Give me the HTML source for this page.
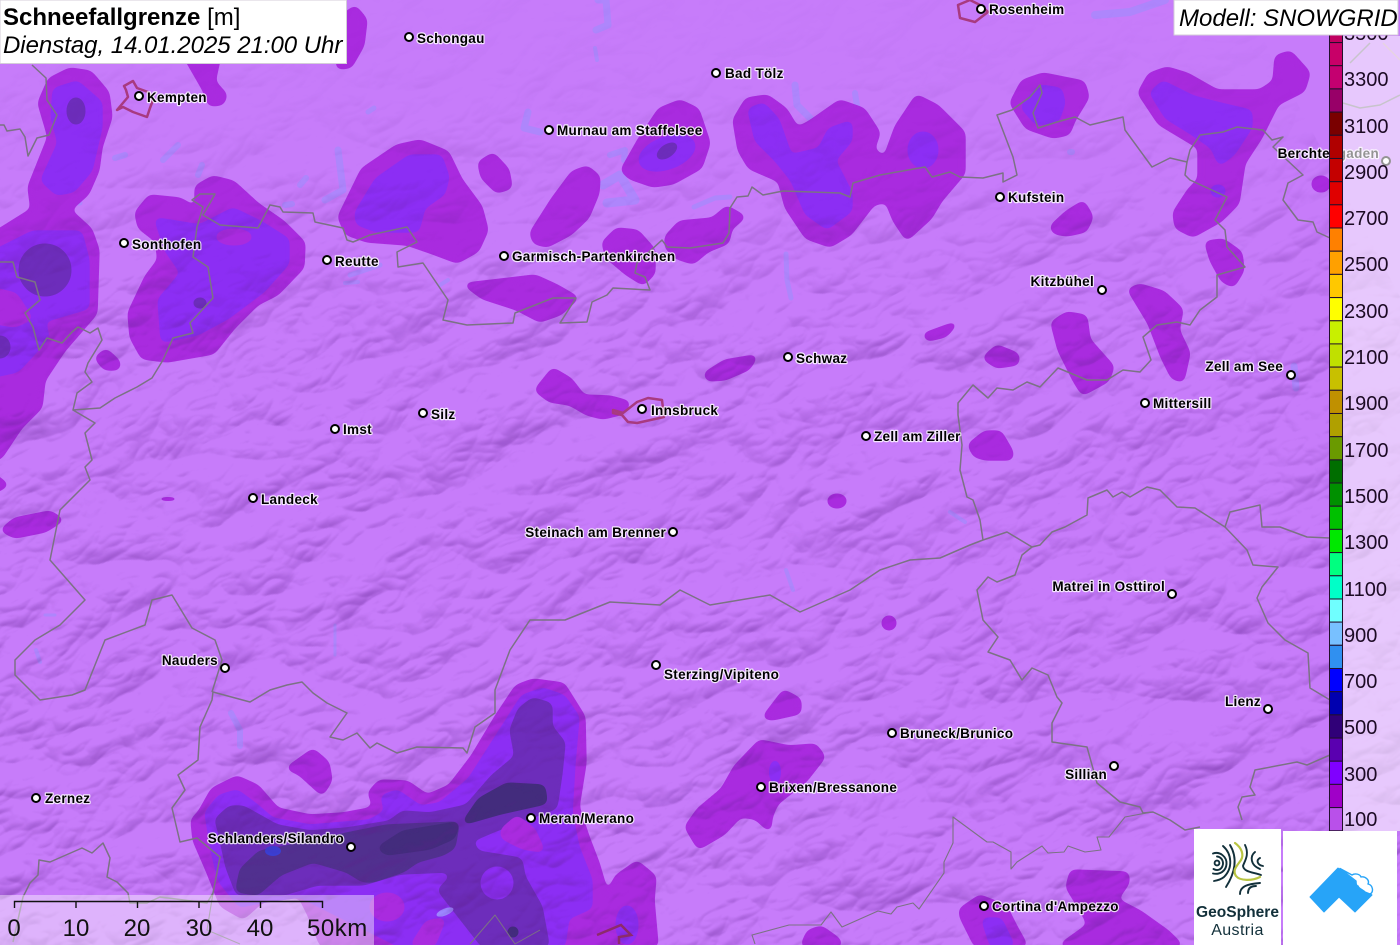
<!DOCTYPE html>
<html><head><meta charset="utf-8"><title>Schneefallgrenze</title>
<style>
html,body{margin:0;padding:0;width:1400px;height:945px;overflow:hidden;background:#c77cfa}
svg{position:absolute;left:0;top:0;display:block;overflow:hidden}
text{font-family:"Liberation Sans",sans-serif}
.c text{font-size:13.5px;font-weight:bold;fill:#000;stroke:#fff;stroke-width:2.4px;stroke-opacity:.8;paint-order:stroke;stroke-linejoin:round;letter-spacing:.3px}
.m circle{fill:#fff;stroke:#000;stroke-width:2}
.l1{fill:#a92bdf;stroke:#a92bdf}
.l2{fill:#8c2ef4;stroke:#8c2ef4}
.l3{fill:#6d2dbb;stroke:#6d2dbb}
.l4{fill:#51308f;stroke:#51308f}
.l5{fill:#432c7d;stroke:#432c7d}
.b polygon,.b ellipse{stroke-width:3;stroke-linejoin:round}
.b polygon{filter:url(#g)}
.lk polyline{fill:none;stroke:#ae86fc;stroke-linecap:round;stroke-linejoin:round}
.bd polyline{fill:none;stroke:#7b7284;stroke-width:1.5;stroke-linejoin:round}
.ct polygon{fill:none;stroke:#a83a80;stroke-width:2.5;stroke-linejoin:round}
.lg text{font-size:20px;fill:#1c0a24}
</style></head><body>
<svg width="1400" height="945" viewBox="0 0 1400 945" xmlns="http://www.w3.org/2000/svg">
<defs>
<filter id="g" x="-30%" y="-30%" width="160%" height="160%" color-interpolation-filters="sRGB">
<feGaussianBlur stdDeviation="3.5"/>
<feColorMatrix type="matrix" values="1 0 0 0 0  0 1 0 0 0  0 0 1 0 0  0 0 0 18 -6"/>
</filter>
<filter id="hs" filterUnits="userSpaceOnUse" x="-400" y="-400" width="2200" height="2200" color-interpolation-filters="sRGB">
<feTurbulence type="turbulence" baseFrequency="0.007 0.013" numOctaves="4" seed="7" result="n"/>
<feDiffuseLighting in="n" surfaceScale="11" diffuseConstant="1.05" lighting-color="#fff" result="d"><feDistantLight azimuth="300" elevation="52"/></feDiffuseLighting>
<feColorMatrix in="d" type="matrix" values="0 0 0 0 .36  0 0 0 0 .12  0 0 0 0 .55  -0.6 0 0 0 .5"/>
<feGaussianBlur stdDeviation=".7"/>
</filter>
<pattern id="hp" patternUnits="userSpaceOnUse" x="-400" y="-400" width="2200" height="2200" patternTransform="rotate(-28 700 472)">
<rect x="-400" y="-400" width="2200" height="2200" filter="url(#hs)"/>
</pattern>
<linearGradient id="mg" x1="0" y1="0" x2="0" y2="1"><stop offset="0.03" stop-color="#fff" stop-opacity=".06"/><stop offset="0.17" stop-color="#fff" stop-opacity=".3"/><stop offset="0.36" stop-color="#fff" stop-opacity=".85"/><stop offset="1" stop-color="#fff" stop-opacity="1"/></linearGradient>
<mask id="mk"><rect width="1400" height="945" fill="url(#mg)"/></mask>
</defs>
<rect width="1400" height="945" fill="#c77cfa"/>

<!-- lakes -->
<g class="lk">
<polyline points="786,254 787,280 791,298" stroke-width="5"/>
<polyline points="231,713 240,730 240,746" stroke-width="6"/>
<polyline points="335,625 335,655" stroke-width="3"/>
<polyline points="786,570 793,590" stroke-width="4"/>
<polyline points="950,512 965,522" stroke-width="4"/>
<polyline points="598,0 606,0 608,25 596,30" stroke-width="7"/>
<polyline points="595,48 597,60" stroke-width="4"/>
<polyline points="528,112 524,128 540,132" stroke-width="7"/>
<polyline points="795,85 797,105 812,120" stroke-width="7"/>
<polyline points="855,93 857,106" stroke-width="6"/>
<polyline points="603,185 620,175 635,200 607,203" stroke-width="9"/>
<polyline points="610,155 625,150 624,160" stroke-width="6"/>
<polyline points="694,207 715,198 730,197" stroke-width="5"/>
<polyline points="1095,15 1130,12 1165,0" stroke-width="8"/>
<polyline points="1294,366 1296,388" stroke-width="7"/>
<polyline points="115,158 125,155" stroke-width="6"/>
<polyline points="163,160 178,145" stroke-width="6"/>
<polyline points="198,175 202,165" stroke-width="6"/>
<polyline points="300,185 306,178" stroke-width="6"/>
<polyline points="285,205 292,204" stroke-width="6"/>
<polyline points="338,150 343,190 325,200" stroke-width="7"/>
<polyline points="368,112 374,108" stroke-width="5"/>
<polyline points="350,275 380,265" stroke-width="5"/>
<polyline points="345,283 358,282" stroke-width="4"/>
<polyline points="440,285 448,280" stroke-width="4"/>
<polyline points="68,203 80,203" stroke-width="5"/>
<polyline points="36,650 40,662" stroke-width="4"/>
<polyline points="1070,152 1072,152" stroke-width="6"/>
<polyline points="45,615 55,615" stroke-width="3"/>
</g>

<!-- level 1 blobs -->
<g class="b">
<polygon class="l1" points="70,70 90,73 107,93 110,117 100,147 97,170 87,193 68,210 90,230 97,250 95,313 63,350 43,380 40,407 20,427 0,457 -15,460 -15,240 33,210 30,187 50,137 40,103 50,80"/>
<polygon class="l1" points="137,213 150,197 180,200 197,210 197,187 213,178 233,183 257,205 283,223 303,243 302,267 277,293 257,303 233,327 213,352 167,360 143,357 132,337 130,313 147,277 160,260 157,240 140,227"/>
<polygon class="l1" points="340,217 363,170 397,147 420,142 447,153 460,180 480,207 486,230 477,250 457,261 433,252 407,243 367,240 347,233"/>
<polygon class="l1" points="480,163 493,155 507,170 510,187 497,191 483,177"/>
<polygon class="l1" points="182,50 220,50 213,82 225,95 222,103 210,104 205,90"/>
<polygon class="l1" points="345,15 355,8 365,20 362,45 350,66 338,67"/>
<polygon class="l1" points="623,170 640,140 660,110 680,102 697,110 708,143 700,167 673,182 653,185 630,177"/>
<polygon class="l1" points="532,233 553,200 573,173 587,168 598,177 597,193 587,217 570,233 547,245 535,242"/>
<polygon class="l1" points="604,243 617,230 637,232 653,250 653,273 643,283 627,273 608,257"/>
<polygon class="l1" points="667,237 680,223 713,220 727,208 743,217 730,228 727,242 707,250 693,262 677,257 667,247"/>
<polygon class="l1" points="467,285 493,282 535,277 557,287 576,298 560,313 540,320 517,308 483,297"/>
<polygon class="l1" points="735,120 747,100 767,97 785,110 797,130 810,123 840,102 863,110 878,133 872,150 885,160 897,127 917,97 937,107 963,133 963,173 940,200 930,217 907,238 895,220 887,200 873,203 850,233 830,245 807,237 787,207 780,180 750,167 740,150"/>
<polygon class="l1" points="1012,103 1023,82 1043,75 1083,83 1087,97 1073,120 1068,133 1053,136 1027,127"/>
<polygon class="l1" points="1140,93 1150,75 1167,69 1187,75 1217,92 1260,92 1275,82 1277,57 1290,53 1308,73 1303,90 1277,103 1260,137 1243,163 1237,203 1220,220 1193,235 1177,227 1175,213 1190,190 1200,180 1200,147 1160,123"/>
<polygon class="l1" points="1052,227 1067,213 1083,203 1091,217 1085,230 1067,234 1055,232"/>
<polygon class="l1" points="1207,243 1223,241 1240,253 1242,270 1233,285 1223,280 1212,260"/>
<polygon class="l1" points="1130,290 1140,286 1163,293 1181,310 1177,330 1188,353 1182,380 1173,377 1163,357 1150,323"/>
<polygon class="l1" points="1053,323 1067,314 1085,317 1088,340 1112,367 1107,380 1083,393 1075,380 1060,350"/>
<polygon class="l1" points="985,358 997,347 1017,355 1017,363 997,366"/>
<ellipse class="l1" cx="1321" cy="184" rx="8" ry="7"/>
<polygon class="l1" points="706,374 725,362 755,357 748,368 725,378 708,379"/>
<polygon class="l1" points="925,335 955,324 945,335 928,339"/>
<polygon class="l1" points="537,390 553,370 570,380 583,397 610,398 628,403 623,412 603,417 587,413 570,403 550,400"/>
<polygon class="l1" points="3,530 15,520 50,513 61,520 45,530 15,536"/>
<ellipse class="l1" cx="168" cy="499" rx="6" ry="1.5" style="stroke-width:1"/>
<polygon class="l1" points="97,358 106,351 118,362 118,368 105,368"/>
<polygon class="l1" points="970,445 985,433 1000,433 1011,452 1011,458 985,458 975,455"/>
<ellipse class="l1" cx="837" cy="501" rx="8" ry="6"/>
<ellipse class="l1" cx="889" cy="623" rx="6" ry="6"/>
<polygon class="l1" points="765,717 784,692 799,700 799,712 772,718"/>
<polygon class="l1" points="687,827 699,810 723,790 736,767 760,742 789,748 815,746 823,757 805,780 776,803 770,817 769,829 756,817 740,815 723,833 699,847"/>
<polygon class="l1" points="961,910 980,897 1005,907 1015,927 1025,945 976,945 962,917"/>
<polygon class="l1" points="1068,887 1072,872 1127,874 1127,883 1115,900 1140,913 1168,933 1180,945 1062,945 1090,925 1082,910"/>
<polygon class="l1" points="821,928 838,940 840,945 803,945 809,932"/>
<polygon class="l1" points="289,768 313,751 327,763 330,780 322,793 300,773"/>
<polygon class="l1" points="-10,473 6,485 -10,493"/>
<!-- south massif -->
<polygon class="l1" points="200,813 213,790 237,778 257,787 277,810 310,817 343,815 370,810 375,805 370,793 380,782 407,783 427,797 450,787 473,757 497,717 517,687 533,681 563,685 583,717 584,763 577,807 587,837 597,863 607,897 617,877 637,863 654,877 652,900 656,945 322,945 310,915 300,895 262,900 243,917 222,905 208,870 195,840 193,820"/>

<!-- level 2 -->
<polygon class="l2" points="77,83 100,103 100,127 90,170 73,190 57,193 43,180 60,143 53,117 55,90"/>
<polygon class="l2" points="-15,257 33,233 80,233 87,260 87,307 43,320 47,337 33,353 17,370 -15,377"/>
<polygon class="l1" points="-15,288 15,295 30,318 15,325 -15,320"/>
<polygon class="l2" points="157,220 200,227 233,210 260,223 287,240 287,263 263,290 227,317 197,333 163,340 160,300 183,273 167,250"/>
<ellipse class="l1" cx="234" cy="237" rx="16" ry="7"/>
<polygon class="l2" points="357,213 377,180 410,157 440,157 447,177 443,193 423,207 417,230 377,230 358,223"/>
<ellipse class="l2" cx="667" cy="153" rx="28" ry="15" transform="rotate(-20 667 153)"/>
<polygon class="l2" points="750,110 763,105 777,120 790,157 820,150 830,130 850,123 850,140 833,160 850,193 850,210 827,227 807,213 793,180 777,160 757,140"/>
<ellipse class="l2" cx="923" cy="150" rx="14" ry="17"/>
<polygon class="l2" points="1023,107 1040,87 1060,90 1063,103 1057,120 1037,123"/>
<polygon class="l2" points="1152,93 1163,83 1193,98 1220,105 1250,112 1250,127 1233,153 1220,163 1213,147 1193,133 1167,117"/>
<ellipse class="l2" cx="1218" cy="191" rx="6" ry="5"/>
<ellipse class="l2" cx="775" cy="772" rx="5" ry="10" style="stroke-width:2"/>
<polygon class="l2" points="984,920 1000,920 1012,945 992,945"/>
<polygon class="l2" points="207,813 220,797 237,792 257,807 272,820 310,827 370,822 387,812 383,797 397,792 420,808 440,805 470,780 502,730 523,697 543,690 563,697 577,717 573,763 570,813 577,847 590,880 590,907 567,917 563,945 400,945 330,910 300,895 265,900 240,905 220,880 213,850"/>
<ellipse class="l2" cx="627" cy="925" rx="10" ry="18"/>

<!-- level 3+ -->
<polygon class="l3" points="217,820 230,808 243,808 277,827 310,833 347,830 390,823 403,813 430,815 467,807 493,777 517,757 512,730 520,710 533,700 550,705 550,727 563,743 560,773 555,807 493,830 470,840 477,853 520,860 523,877 540,907 547,945 483,945 440,890 453,877 447,870 400,872 363,883 317,883 283,893 260,893 238,893 233,880 228,867 220,830"/>
<ellipse class="l2" cx="497" cy="883" rx="15" ry="15"/>
<ellipse class="l1" cx="387" cy="907" rx="16" ry="13"/>
<polygon class="l1" points="413,945 427,923 443,920 433,945"/>
<polygon class="l1" points="503,830 517,818 533,830 542,850 523,847 503,837"/>
<polygon class="l4" points="238,890 242,870 260,853 313,843 347,835 387,827 457,824 453,847 443,853 417,860 403,870 373,880 363,880 347,870 313,860 280,873 257,893"/>
<polygon class="l5" points="380,848 403,833 457,824 453,837 430,847 387,853"/>
<polygon class="l5" points="465,822 480,800 507,785 543,787 545,802 500,812"/>
<ellipse class="l5" cx="513" cy="932" rx="5" ry="5" style="stroke-width:1"/>
<ellipse cx="273" cy="851" rx="8" ry="5" fill="#3a3fd2" style="stroke:none"/>
<ellipse cx="445" cy="912" rx="9" ry="3.5" fill="#9c86ff" style="stroke:none" transform="rotate(-22 445 912)"/>
<ellipse class="l3" cx="76" cy="111" rx="9" ry="13" style="stroke-width:1"/>
<ellipse class="l3" cx="45" cy="270" rx="26" ry="26" style="stroke-width:1"/>
<ellipse class="l3" cx="0" cy="347" rx="10" ry="11" style="stroke-width:1"/>
<ellipse class="l3" cx="200" cy="303" rx="6" ry="5" style="stroke-width:1"/>
<ellipse class="l3" cx="667" cy="151" rx="11" ry="6" style="stroke-width:1" transform="rotate(-35 667 151)"/>
</g>

<!-- hillshade -->
<g mask="url(#mk)"><rect width="1400" height="945" fill="url(#hp)"/></g>

<!-- borders -->
<g class="bd">
<polyline points="32,65 46,78 47,100 57,115 49,135 37,138 28,156 25,137 20,129 7,131 4,125 0,125"/>
<polyline points="0,262 13,262 17,277 35,282 40,300 25,313 33,327 39,350 47,338 62,343 72,332 78,327 90,333 98,328 102,340 88,363 85,372 92,382 77,393 73,410 100,408 115,398 137,387 152,378 163,360 173,338 193,333 190,323 213,298 208,267 193,257 197,227 203,207 192,200 200,194 215,194 210,203 203,215 220,225 258,228 270,205 280,207 283,212 313,213 315,222 343,228 347,240 353,242 370,235 407,227 417,242 397,252 398,267 423,263 448,300 443,320 467,325 513,323 515,313 553,298 576,298 560,323 587,322 592,302 607,295 613,288 650,290 645,277 635,273 637,263 662,240 667,247 690,248 723,243 729,233 730,208 737,197 748,196 752,187 763,195 783,191 840,193 850,197 853,183 880,175 925,167 932,177 950,172 960,177 983,178 1003,173 1003,182 1017,175 1013,157 997,115 1012,110 1030,97 1040,85 1042,93 1033,113 1038,128 1057,122 1075,117 1090,125 1123,117 1125,130 1152,167 1170,158 1187,162 1190,150 1200,135 1223,132 1237,127 1263,130 1272,140 1283,137 1273,147 1303,175 1288,183 1283,200 1298,220 1313,222 1317,232 1330,238"/>
<polyline points="1187,162 1185,175 1190,180 1227,197 1215,220 1225,230 1227,247 1245,267 1217,275 1217,297 1200,310 1190,325 1177,322 1157,325 1143,337 1151,360 1140,372 1123,370 1107,380 1087,380 1058,368 1040,387 1027,382 1013,390 997,388 988,398 973,385 958,403 958,415 962,445 960,470 967,497 973,500 980,520 983,540"/>
<polyline points="1330,700 1310,688 1308,653 1285,640 1268,623 1257,598 1262,587 1278,567 1253,565 1247,550 1225,527 1195,508 1177,507 1160,490 1147,487 1130,497 1122,492 1113,497 1107,490 1088,498 1087,515 1065,527 1052,532 1040,545 1032,547 1007,532 983,540 970,545 940,558 910,560 880,570 850,590 800,612 770,595 710,605 680,590 660,605 610,602 565,620 530,620 510,650 495,690 495,713 475,727 467,753 463,748 417,747 397,753 377,743 370,748 357,733 343,740 330,737 347,713 327,703 313,693 302,682 287,685 270,690 250,702 213,692 212,700 200,727 198,760 178,775 185,790 172,808 180,842 197,838 220,857 213,893 207,903 160,897 147,903 130,903 128,893 117,882 107,877 110,858 103,843 92,853 82,848 50,862 39,860 38,875 30,883 23,897 13,942"/>
<polyline points="1225,527 1230,512 1260,505 1262,527 1280,527 1307,537 1330,538"/>
<polyline points="1032,547 1022,555 1015,575 997,582 988,577 977,590 983,620 998,637 988,652 1010,660 1022,680 1032,668 1048,675 1057,697 1062,703 1052,723 1052,742 1087,747 1097,783 1120,802 1140,807 1143,813 1153,812 1170,820 1185,830 1200,827"/>
<polyline points="1152,812 1125,817 1109,837 1097,837 1101,850 1085,852 1068,846 1064,852 1048,853 1042,846 1017,862 1011,869 1011,852 993,842 987,842 953,817 953,843 944,862 944,873 919,909 913,903 897,907 891,914 878,911 842,927 831,912 821,925 789,925 752,935 755,944" style="stroke-width:1.1"/>
<polyline points="1330,755 1307,765 1297,762 1255,770 1250,787 1255,795 1242,797 1238,807 1242,820"/>
<polyline points="73,410 95,423 85,433 92,460 85,467 90,480 60,510 50,560 85,600 60,625 35,640 15,660 15,675 40,700 72,695 85,690 105,640 145,625 152,600 172,595 192,628 215,640 222,660 212,692"/>
<polyline points="1343,103 1360,108 1380,105 1400,95"/>
<polyline points="1350,63 1370,43"/>
<polyline points="1383,43 1400,60" style="stroke:#c59ab5"/>
<polyline points="213,893 207,930 240,944" style="stroke-width:1.1"/>
<polyline points="470,944 495,915 515,944 540,930" style="stroke-width:1"/>
</g>

<!-- city polygons -->
<g class="ct">
<polygon points="124,86 133,81 137,88 148,92 153,100 150,108 147,117 133,112 123,107 117,110 128,97 126,90"/>
<polygon points="613,410 623,413 637,402 648,398 662,400 664,417 637,423 628,422 622,415 613,413"/>
<polygon points="958,5 970,0 980,5 988,12 975,22 960,18"/>
<polyline points="597,935 621,925 631,935 619,937 619,944" style="fill:none;stroke:#8c2a6c;stroke-width:2.5"/>
</g>

<!-- cities -->
<g class="m">
<circle cx="139" cy="96" r="4"/><circle cx="409" cy="37" r="4"/><circle cx="716" cy="73" r="4"/><circle cx="981" cy="9" r="4"/><circle cx="549" cy="130" r="4"/><circle cx="124" cy="243" r="4"/><circle cx="327" cy="260" r="4"/><circle cx="504" cy="256" r="4"/><circle cx="1000" cy="197" r="4"/><circle cx="1102" cy="290" r="4"/><circle cx="788" cy="357" r="4"/><circle cx="1291" cy="375" r="4"/><circle cx="1145" cy="403" r="4"/><circle cx="642" cy="409" r="4"/><circle cx="423" cy="413" r="4"/><circle cx="335" cy="429" r="4"/><circle cx="866" cy="436" r="4"/><circle cx="253" cy="498" r="4"/><circle cx="673" cy="532" r="4"/><circle cx="1172" cy="594" r="4"/><circle cx="225" cy="668" r="4"/><circle cx="656" cy="665" r="4"/><circle cx="1268" cy="709" r="4"/><circle cx="892" cy="733" r="4"/><circle cx="1114" cy="766" r="4"/><circle cx="761" cy="787" r="4"/><circle cx="36" cy="798" r="4"/><circle cx="531" cy="818" r="4"/><circle cx="351" cy="847" r="4"/><circle cx="984" cy="906" r="4"/><circle cx="1386" cy="161" r="4"/>
</g>
<g class="c">
<text x="147" y="102">Kempten</text>
<text x="417" y="43">Schongau</text>
<text x="725" y="78">Bad Tölz</text>
<text x="989" y="14">Rosenheim</text>
<text x="557" y="135">Murnau am Staffelsee</text>
<text x="132" y="249">Sonthofen</text>
<text x="335" y="266">Reutte</text>
<text x="512" y="261">Garmisch-Partenkirchen</text>
<text x="1008" y="202">Kufstein</text>
<text x="1094" y="286" text-anchor="end">Kitzbühel</text>
<text x="796" y="363">Schwaz</text>
<text x="1283" y="371" text-anchor="end">Zell am See</text>
<text x="1153" y="408">Mittersill</text>
<text x="651" y="415">Innsbruck</text>
<text x="431" y="419">Silz</text>
<text x="343" y="434">Imst</text>
<text x="874" y="441">Zell am Ziller</text>
<text x="261" y="504">Landeck</text>
<text x="666" y="537" text-anchor="end">Steinach am Brenner</text>
<text x="1165" y="591" text-anchor="end">Matrei in Osttirol</text>
<text x="218" y="665" text-anchor="end">Nauders</text>
<text x="664" y="679">Sterzing/Vipiteno</text>
<text x="1261" y="706" text-anchor="end">Lienz</text>
<text x="900" y="738">Bruneck/Brunico</text>
<text x="1107" y="779" text-anchor="end">Sillian</text>
<text x="769" y="792">Brixen/Bressanone</text>
<text x="45" y="803">Zernez</text>
<text x="539" y="823">Meran/Merano</text>
<text x="344" y="843" text-anchor="end">Schlanders/Silandro</text>
<text x="992" y="911">Cortina d'Ampezzo</text>
<text x="1379" y="158" text-anchor="end">Berchtesgaden</text>
</g>

<!-- scale -->
<rect x="0" y="895" width="374" height="50" fill="#fff" fill-opacity=".42"/>
<path d="M14.5 908V901.5H322.5V908M76 901.5V908M137.5 901.5V908M199 901.5V908M260.5 901.5V908" fill="none" stroke="#111" stroke-width="1.4"/>
<g font-size="24" fill="#111" text-anchor="middle">
<text x="14" y="936">0</text><text x="76" y="936">10</text><text x="137" y="936">20</text><text x="199" y="936">30</text><text x="260" y="936">40</text>
<text x="307" y="936" text-anchor="start" letter-spacing=".5">50km</text>
</g>

<!-- legend -->
<rect x="1343" y="36" width="57" height="795" fill="#fff" fill-opacity=".58"/>
<g stroke="#22102c" stroke-width="1">
<rect x="1329.5" y="19.4" width="13" height="23.18" fill="#c00060"/>
<rect x="1329.5" y="42.6" width="13" height="23.18" fill="#c80068"/>
<rect x="1329.5" y="65.7" width="13" height="23.18" fill="#c40070"/>
<rect x="1329.5" y="88.9" width="13" height="23.18" fill="#980068"/>
<rect x="1329.5" y="112.1" width="13" height="23.18" fill="#7a0000"/>
<rect x="1329.5" y="135.3" width="13" height="23.18" fill="#b00000"/>
<rect x="1329.5" y="158.5" width="13" height="23.18" fill="#c40000"/>
<rect x="1329.5" y="181.7" width="13" height="23.18" fill="#e00000"/>
<rect x="1329.5" y="204.8" width="13" height="23.18" fill="#ff0000"/>
<rect x="1329.5" y="228" width="13" height="23.18" fill="#ff8000"/>
<rect x="1329.5" y="251.2" width="13" height="23.18" fill="#ffa000"/>
<rect x="1329.5" y="274.4" width="13" height="23.18" fill="#ffc800"/>
<rect x="1329.5" y="297.6" width="13" height="23.18" fill="#ffff00"/>
<rect x="1329.5" y="320.8" width="13" height="23.18" fill="#c8f000"/>
<rect x="1329.5" y="343.9" width="13" height="23.18" fill="#c0e000"/>
<rect x="1329.5" y="367.1" width="13" height="23.18" fill="#c8c000"/>
<rect x="1329.5" y="390.3" width="13" height="23.18" fill="#c09000"/>
<rect x="1329.5" y="413.5" width="13" height="23.18" fill="#b0a000"/>
<rect x="1329.5" y="436.7" width="13" height="23.18" fill="#6a9a00"/>
<rect x="1329.5" y="459.9" width="13" height="23.18" fill="#006e00"/>
<rect x="1329.5" y="483" width="13" height="23.18" fill="#009000"/>
<rect x="1329.5" y="506.2" width="13" height="23.18" fill="#00c000"/>
<rect x="1329.5" y="529.4" width="13" height="23.18" fill="#00e800"/>
<rect x="1329.5" y="552.6" width="13" height="23.18" fill="#00ff80"/>
<rect x="1329.5" y="575.8" width="13" height="23.18" fill="#00ffc8"/>
<rect x="1329.5" y="599" width="13" height="23.18" fill="#70ffff"/>
<rect x="1329.5" y="622.1" width="13" height="23.18" fill="#78c0ff"/>
<rect x="1329.5" y="645.3" width="13" height="23.18" fill="#3090f0"/>
<rect x="1329.5" y="668.5" width="13" height="23.18" fill="#0000ff"/>
<rect x="1329.5" y="691.7" width="13" height="23.18" fill="#0000b0"/>
<rect x="1329.5" y="714.9" width="13" height="23.18" fill="#300078"/>
<rect x="1329.5" y="738.1" width="13" height="23.18" fill="#5a00b0"/>
<rect x="1329.5" y="761.2" width="13" height="23.18" fill="#8000ff"/>
<rect x="1329.5" y="784.4" width="13" height="23.18" fill="#a000c8"/>
<rect x="1329.5" y="807.6" width="13" height="23.18" fill="#b950ea"/>
</g>
<g class="lg">
<text x="1344" y="40">3500</text><text x="1344" y="86">3300</text><text x="1344" y="133">3100</text><text x="1344" y="179">2900</text><text x="1344" y="225">2700</text><text x="1344" y="271">2500</text><text x="1344" y="318">2300</text><text x="1344" y="364">2100</text><text x="1344" y="410">1900</text><text x="1344" y="457">1700</text><text x="1344" y="503">1500</text><text x="1344" y="549">1300</text><text x="1344" y="596">1100</text><text x="1344" y="642">900</text><text x="1344" y="734">500</text><text x="1344" y="688">700</text><text x="1344" y="781">300</text><text x="1344" y="826">100</text>
</g>

<!-- title -->
<rect x="0" y="0" width="346.5" height="63.5" fill="#fff" stroke="#d4cdd8" stroke-width="1"/>
<text x="3" y="25" font-size="24" fill="#000"><tspan font-weight="bold">Schneefallgrenze</tspan> [m]</text>
<text x="3" y="53" font-size="24" font-style="italic" fill="#000" letter-spacing="-.03">Dienstag, 14.01.2025 21:00 Uhr</text>
<rect x="1174" y="0" width="224" height="35" fill="#fff" stroke="#d4cdd8" stroke-width="1"/>
<text x="1179" y="26" font-size="24" font-style="italic" fill="#000">Modell: SNOWGRID</text>

<!-- logos -->
<rect x="1194" y="829" width="87" height="116" fill="#fff"/>
<rect x="1283" y="831" width="114" height="114" fill="#fff"/>
<g fill="none" stroke="#12303a" stroke-width="1.9" stroke-linecap="round">
<circle cx="1217" cy="863" r="2.4"/>
<path d="M1217 856.5C1222 857 1224 862 1222.5 866C1221 870 1217 871 1213.5 869"/>
<path d="M1213 853.5C1220 851 1227 857 1226.5 864C1226 871 1220 875 1213 873.5"/>
<path d="M1223 846C1232 854 1233 868 1224 877C1221 879.5 1217 880.5 1214 881"/>
<path d="M1230 845C1238 858 1235 873 1226 887"/>
<path d="M1245 845C1250 855 1244 862 1243 866C1244 872 1252 872 1261 875"/>
<path d="M1255 852C1250 856 1250 865 1260 869"/>
<path d="M1260 858C1256 860 1257 865 1263 866"/>
<path d="M1240 894C1240 886 1248 884 1260 883"/>
<path d="M1248 893C1248 888 1251 886 1256 886"/>
</g>
<path d="M1235 843C1242 848 1244 855 1241 860C1237 866 1232 870 1236 876C1240 881 1252 881 1260 877" fill="none" stroke="#b9c542" stroke-width="2.2" stroke-linecap="round"/>
<text x="1237.5" y="917" font-size="15.5" font-weight="bold" fill="#12303a" text-anchor="middle" textLength="83" lengthAdjust="spacingAndGlyphs">GeoSphere</text>
<text x="1237.5" y="935" font-size="16" fill="#12303a" text-anchor="middle" letter-spacing=".4">Austria</text>
<polygon points="1310,897 1338,868 1372,895 1355,912 1339,897 1324,912" fill="#27a4f8" stroke="#27a4f8" stroke-linejoin="round"/>
<path d="M1340 868.5L1352 875C1355 873 1360 874 1361 877C1365 876 1370 880 1368 884C1373 885 1374 892 1370 894L1365 892C1362 889 1359 889 1358 886C1356 886 1356 883 1356 881Z" fill="#fff" stroke="#27a4f8" stroke-width="1.4" stroke-linejoin="round"/>
</svg>
</body></html>
